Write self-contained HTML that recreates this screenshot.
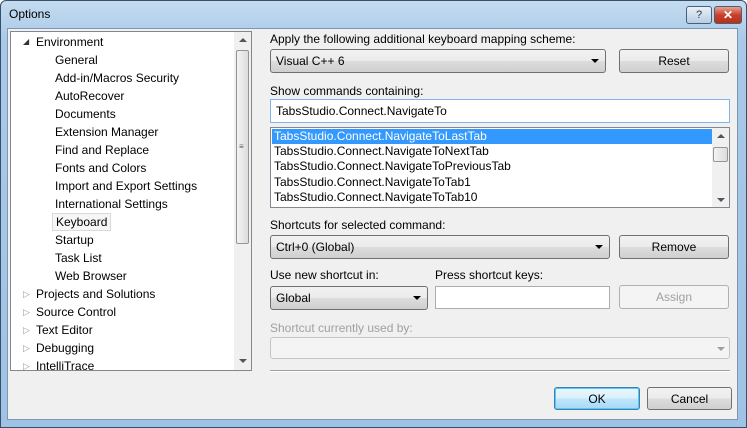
<!DOCTYPE html>
<html><head><style>
*{box-sizing:border-box;margin:0;padding:0}
body{width:747px;height:428px;overflow:hidden;font-family:"Liberation Sans",sans-serif;font-size:12px;color:#000;background:#fff}
.win{position:absolute;left:0;top:0;width:747px;height:428px;border:1px solid #3a4f66;border-radius:6px 6px 0 0;background:linear-gradient(#c4dcf0,#a9c9e8 40px,#9fc3e6);}
.client{position:absolute;left:7px;top:28px;width:731px;height:392px;background:#f0f0f0;border:1px solid #7e96b2}
.a{position:absolute;white-space:nowrap}
.title{left:8px;top:6px;font-size:12px}
.tb{position:absolute;top:5px;height:18px;border:1px solid #4a5e78;border-radius:3px}
.tree{left:10px;top:31px;width:242px;height:340px;background:#fff;border:1px solid #828790}
.row{position:absolute;height:18px;line-height:18px}
.sb{position:absolute;background:#f0f0f0}
.combo{position:absolute;height:24px;border:1px solid #707070;border-radius:3px;background:linear-gradient(#f2f2f2,#ebebeb 50%,#dddddd 51%,#cfcfcf);padding-left:5px;line-height:22px}
.combo:after{content:"";position:absolute;right:6px;top:9px;border-left:4px solid transparent;border-right:4px solid transparent;border-top:4px solid #000}
.btn{position:absolute;height:24px;border:1px solid #707070;border-radius:3px;background:linear-gradient(#f2f2f2,#ebebeb 50%,#dddddd 51%,#cfcfcf);text-align:center;line-height:22px}
.tbx{position:absolute;background:#fff;border:1px solid #abadb3;padding-left:5px;line-height:21px}
.list{left:270px;top:127px;width:460px;height:81px;background:#fff;border:1px solid #828790}
.li{position:absolute;left:3px;height:15px;line-height:15px}
.exp{position:absolute;left:22px;width:0;height:0;border-top:4px solid transparent;border-bottom:4px solid transparent;border-left:5px solid #fff;}
</style></head><body>
<div class="win">
<div class="a title">Options</div>
<div class="tb" style="left:685px;width:26px;background:linear-gradient(#e8f0f8,#b8cde2);text-align:center;font-size:11px;line-height:16px;color:#333">?</div>
<div class="tb" style="left:713px;width:28px;background:linear-gradient(#e8a090,#c8402a 50%,#b83018);text-align:center;color:#fff;font-weight:bold;font-size:12px;line-height:16px">✕</div>
</div>
<div class="client"></div>

<div class="a tree">
<div class="row" style="left:12px;top:1px;font-size:8px;color:#333">◢</div>
<div class="row" style="left:25px;top:1px">Environment</div>
<div class="row" style="left:44px;top:19px">General</div>
<div class="row" style="left:44px;top:37px">Add-in/Macros Security</div>
<div class="row" style="left:44px;top:55px">AutoRecover</div>
<div class="row" style="left:44px;top:73px">Documents</div>
<div class="row" style="left:44px;top:91px">Extension Manager</div>
<div class="row" style="left:44px;top:109px">Find and Replace</div>
<div class="row" style="left:44px;top:127px">Fonts and Colors</div>
<div class="row" style="left:44px;top:145px">Import and Export Settings</div>
<div class="row" style="left:44px;top:163px">International Settings</div>
<div class="row" style="left:41px;top:181px;padding:0 3px;border:1px solid #d9d9d9;background:#f6f6f6;line-height:16px">Keyboard</div>
<div class="row" style="left:44px;top:199px">Startup</div>
<div class="row" style="left:44px;top:217px">Task List</div>
<div class="row" style="left:44px;top:235px">Web Browser</div>
<div class="row" style="left:12px;top:253px;color:#999;font-size:9px">▷</div><div class="row" style="left:25px;top:253px">Projects and Solutions</div>
<div class="row" style="left:12px;top:271px;color:#999;font-size:9px">▷</div><div class="row" style="left:25px;top:271px">Source Control</div>
<div class="row" style="left:12px;top:289px;color:#999;font-size:9px">▷</div><div class="row" style="left:25px;top:289px">Text Editor</div>
<div class="row" style="left:12px;top:307px;color:#999;font-size:9px">▷</div><div class="row" style="left:25px;top:307px">Debugging</div>
<div class="row" style="left:12px;top:325px;color:#999;font-size:9px;height:13px;overflow:hidden">▷</div><div class="row" style="left:25px;top:325px;height:13px;overflow:hidden">IntelliTrace</div>
<div class="sb" style="left:223px;top:0;width:17px;height:338px"></div>
<div class="a" style="left:228px;top:6px;border-left:4px solid transparent;border-right:4px solid transparent;border-bottom:4px solid #555"></div>
<div class="a" style="left:225px;top:18px;width:13px;height:194px;border:1px solid #959595;border-radius:2px;background:linear-gradient(90deg,#f3f3f3,#dcdcdc)"></div>
<div class="a" style="left:228px;top:110px;font-size:8px;color:#555">≡</div>
<div class="a" style="left:228px;top:327px;border-left:4px solid transparent;border-right:4px solid transparent;border-top:4px solid #555"></div>
</div>

<div class="a" style="left:270px;top:32px">Apply the following additional keyboard mapping scheme:</div>
<div class="combo" style="left:270px;top:49px;width:336px">Visual C++ 6</div>
<div class="btn" style="left:619px;top:49px;width:110px">Reset</div>
<div class="a" style="left:270px;top:84px">Show commands containing:</div>
<div class="tbx" style="left:270px;top:99px;width:460px;height:24px;border-color:#7eb4ea;line-height:22px">TabsStudio.Connect.NavigateTo</div>
<div class="a list">
<div class="a" style="left:1px;top:1px;width:440px;height:15px;background:#3399ff"></div>
<div class="li" style="top:1px;color:#fff">TabsStudio.Connect.NavigateToLastTab</div>
<div class="li" style="top:16px">TabsStudio.Connect.NavigateToNextTab</div>
<div class="li" style="top:31px">TabsStudio.Connect.NavigateToPreviousTab</div>
<div class="li" style="top:47px">TabsStudio.Connect.NavigateToTab1</div>
<div class="li" style="top:62px">TabsStudio.Connect.NavigateToTab10</div>
<div class="sb" style="left:441px;top:0;width:17px;height:79px"></div>
<div class="a" style="left:446px;top:6px;border-left:4px solid transparent;border-right:4px solid transparent;border-bottom:4px solid #555"></div>
<div class="a" style="left:442px;top:19px;width:15px;height:15px;border:1px solid #959595;border-radius:2px;background:linear-gradient(90deg,#f3f3f3,#dcdcdc)"></div>
<div class="a" style="left:446px;top:70px;border-left:4px solid transparent;border-right:4px solid transparent;border-top:4px solid #555"></div>
</div>
<div class="a" style="left:270px;top:218px">Shortcuts for selected command:</div>
<div class="combo" style="left:270px;top:235px;width:340px">Ctrl+0 (Global)</div>
<div class="btn" style="left:619px;top:235px;width:110px">Remove</div>
<div class="a" style="left:270px;top:268px">Use new shortcut in:</div>
<div class="a" style="left:435px;top:268px">Press shortcut keys:</div>
<div class="combo" style="left:270px;top:286px;width:158px">Global</div>
<div class="tbx" style="left:435px;top:286px;width:175px;height:23px"></div>
<div class="btn" style="left:619px;top:285px;width:110px;background:#f4f4f4;border-color:#adb2b5;color:#a0a0a0">Assign</div>
<div class="a" style="left:270px;top:321px;color:#a0a0a0">Shortcut currently used by:</div>
<div class="a" style="left:270px;top:337px;width:460px;height:22px;border:1px solid #c5c5c5;border-radius:3px;background:#f4f4f4"></div>
<div class="a" style="left:717px;top:347px;border-left:4px solid transparent;border-right:4px solid transparent;border-top:4px solid #a0a0a0"></div>
<div class="a" style="left:270px;top:370px;width:460px;height:2px;border-top:1px solid #a0a0a0;border-bottom:1px solid #fff"></div>
<div class="btn" style="left:554px;top:387px;width:86px;height:23px;border-color:#3c7fb1;background:linear-gradient(#eaf6fd,#d9f0fc 50%,#bee6fd 51%,#a7d9f5);box-shadow:inset 0 0 0 1px #5ec6f4">OK</div>
<div class="btn" style="left:647px;top:387px;width:85px;height:23px">Cancel</div>
</body></html>
